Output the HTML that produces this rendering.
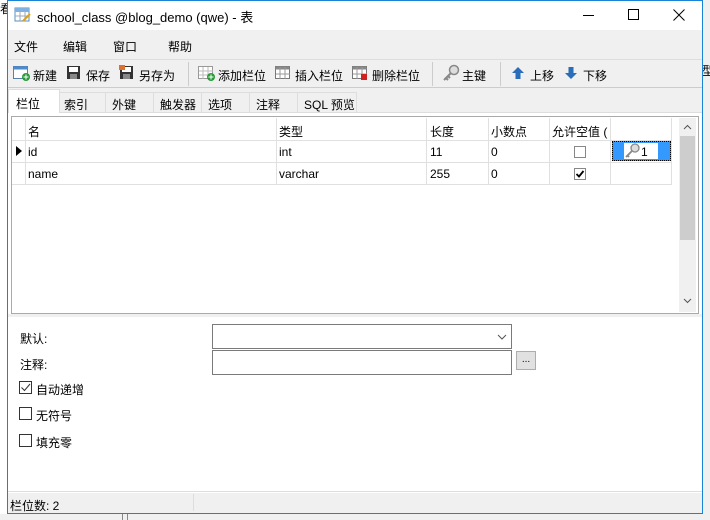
<!DOCTYPE html><html><head><meta charset="utf-8"><style>
*{margin:0;padding:0;box-sizing:border-box}
body{width:710px;height:520px;overflow:hidden;background:#f0f0f0;font-family:"Liberation Sans","Noto Sans CJK SC",sans-serif;font-size:12px;color:#000;position:relative}
.a{position:absolute}
</style></head><body>
<div class="a" style="left:0;top:0;width:7px;height:520px;background:#fff"></div>
<div class="a" style="left:0;top:0;width:7px;height:18px;font-size:12px">看</div>
<div class="a" style="left:0;top:514px;width:710px;height:6px;background:#f0f0f0"></div>
<div class="a" style="left:122px;top:512px;width:6px;height:8px;border-left:1px solid #888;border-right:1px solid #888"></div>
<div class="a" style="left:702px;top:0;width:8px;height:520px;background:#f0f0f0"></div>
<div class="a" style="left:702px;top:62px;font-size:12px">型</div>
<div class="a" style="left:7px;top:0;width:696px;height:514px;border:1px solid #1883d7;background:#f0f0f0"></div>
<div class="a" style="left:8px;top:1px;width:694px;height:29px;background:#fff"></div>
<svg class="a" style="left:14px;top:7px" width="18" height="16"><rect x="1" y="1" width="14" height="13" fill="#fff" stroke="#5a8fc2"/><rect x="1" y="1" width="14" height="4" fill="#7fb2e0"/><path d="M6 5v9M11 5v9M1 9h14" stroke="#9ab"/><path d="M9 14l7-7" stroke="#d9a020" stroke-width="2"/></svg>
<div class="a" style="left:37px;top:7px;font-size:13px">school_class @blog_demo (qwe) - 表</div>
<div class="a" style="left:583px;top:15px;width:11px;height:1px;background:#000"></div>
<div class="a" style="left:628px;top:9px;width:11px;height:11px;border:1px solid #000"></div>
<svg class="a" style="left:673px;top:9px" width="12" height="12"><path d="M0.5 0.5l11 11M11.5 0.5l-11 11" stroke="#000"/></svg>
<div class="a" style="left:14px;top:38px">文件</div>
<div class="a" style="left:63px;top:38px">编辑</div>
<div class="a" style="left:113px;top:38px">窗口</div>
<div class="a" style="left:168px;top:38px">帮助</div>
<div class="a" style="left:8px;top:59px;width:694px;height:1px;background:#ddd"></div>
<svg class="a" style="left:13px;top:65px" width="18" height="16"><rect x="0.5" y="1.5" width="14" height="12" fill="#fff" stroke="#5a7fa8"/><rect x="0.5" y="1.5" width="14" height="3" fill="#4a8ccd"/><circle cx="13" cy="12" r="4" fill="#2a9a3a"/><path d="M13 9.5v5M10.5 12h5" stroke="#fff"/></svg>
<div class="a" style="left:33px;top:67px">新建</div>
<svg class="a" style="left:66px;top:65px" width="16" height="16"><rect x="1" y="1" width="13" height="13" fill="#333"/><rect x="3" y="2" width="9" height="5" fill="#fff"/><rect x="4" y="9" width="7" height="5" fill="#888"/></svg>
<div class="a" style="left:86px;top:67px">保存</div>
<svg class="a" style="left:119px;top:65px" width="16" height="16"><rect x="1" y="1" width="13" height="13" fill="#333"/><rect x="3" y="2" width="9" height="5" fill="#fff"/><rect x="0" y="0" width="6" height="5" fill="#e07030"/><rect x="4" y="9" width="7" height="5" fill="#888"/></svg>
<div class="a" style="left:139px;top:67px">另存为</div>
<div class="a" style="left:188px;top:62px;width:1px;height:24px;background:#ccc"></div>
<svg class="a" style="left:198px;top:65px" width="18" height="16"><rect x="0.5" y="1.5" width="14" height="12" fill="#fff" stroke="#999"/><path d="M5 2v12M10 2v12M1 6h14M1 10h14" stroke="#bbb"/><circle cx="13" cy="12" r="4" fill="#2a9a3a"/><path d="M13 9.5v5M10.5 12h5" stroke="#fff"/></svg>
<div class="a" style="left:218px;top:67px">添加栏位</div>
<svg class="a" style="left:275px;top:65px" width="16" height="16"><rect x="0.5" y="1.5" width="14" height="12" fill="#fff" stroke="#777"/><rect x="0.5" y="1.5" width="14" height="3" fill="#888"/><path d="M5 2v12M10 2v12M1 9h14" stroke="#999"/></svg>
<div class="a" style="left:295px;top:67px">插入栏位</div>
<svg class="a" style="left:352px;top:65px" width="16" height="16"><rect x="0.5" y="1.5" width="14" height="12" fill="#fff" stroke="#777"/><rect x="0.5" y="1.5" width="14" height="3" fill="#888"/><path d="M5 2v12M10 2v12M1 9h14" stroke="#999"/><rect x="9" y="9" width="6" height="6" fill="#d02020"/></svg>
<div class="a" style="left:372px;top:67px">删除栏位</div>
<div class="a" style="left:432px;top:62px;width:1px;height:24px;background:#ccc"></div>
<svg class="a" style="left:442px;top:64px" width="18" height="18"><circle cx="12" cy="6" r="4.5" fill="#ddd" stroke="#888" stroke-width="1.5"/><path d="M9 9l-7 7M4 14l2 2M6 12l2 2" stroke="#888" stroke-width="2"/></svg>
<div class="a" style="left:462px;top:67px">主键</div>
<div class="a" style="left:500px;top:62px;width:1px;height:24px;background:#ccc"></div>
<svg class="a" style="left:511px;top:66px" width="14" height="14"><path d="M7 1l6 6h-3.5v6h-5v-6H1z" fill="#2a6db8"/></svg>
<div class="a" style="left:530px;top:67px">上移</div>
<svg class="a" style="left:564px;top:66px" width="14" height="14"><path d="M7 13l6-6h-3.5v-6h-5v6H1z" fill="#2a6db8"/></svg>
<div class="a" style="left:583px;top:67px">下移</div>
<div class="a" style="left:8px;top:87px;width:694px;height:1px;background:#ccc"></div>
<div class="a" style="left:8px;top:91px;width:694px;height:22px;border-bottom:1px solid #ddd"></div>
<div class="a" style="left:59px;top:92px;width:298px;height:21px;border:1px solid #ddd;background:#f0f0f0"></div>
<div class="a" style="left:8px;top:89px;width:52px;height:25px;background:#fff;border:1px solid #ddd;border-bottom:none"></div>
<div class="a" style="left:16px;top:95px">栏位</div>
<div class="a" style="left:64px;top:96px">索引</div>
<div class="a" style="left:105px;top:92px;width:1px;height:21px;background:#ddd"></div>
<div class="a" style="left:112px;top:96px">外键</div>
<div class="a" style="left:153px;top:92px;width:1px;height:21px;background:#ddd"></div>
<div class="a" style="left:160px;top:96px">触发器</div>
<div class="a" style="left:201px;top:92px;width:1px;height:21px;background:#ddd"></div>
<div class="a" style="left:208px;top:96px">选项</div>
<div class="a" style="left:249px;top:92px;width:1px;height:21px;background:#ddd"></div>
<div class="a" style="left:256px;top:96px">注释</div>
<div class="a" style="left:297px;top:92px;width:1px;height:21px;background:#ddd"></div>
<div class="a" style="left:304px;top:96px">SQL 预览</div>
<div class="a" style="left:8px;top:113px;width:694px;height:380px;background:#fff"></div>
<div class="a" style="left:11px;top:116px;width:688px;height:198px;border:1px solid #aaa;background:#fff"></div>
<div class="a" style="left:8px;top:314px;width:694px;height:3px;background:#f0f0f0"></div>
<div class="a" style="left:12px;top:140px;width:659px;height:1px;background:#e0e0e0"></div>
<div class="a" style="left:12px;top:162px;width:659px;height:1px;background:#e0e0e0"></div>
<div class="a" style="left:12px;top:184px;width:659px;height:1px;background:#e0e0e0"></div>
<div class="a" style="left:25px;top:118px;width:1px;height:67px;background:#e0e0e0"></div>
<div class="a" style="left:276px;top:118px;width:1px;height:67px;background:#e0e0e0"></div>
<div class="a" style="left:426px;top:118px;width:1px;height:67px;background:#e0e0e0"></div>
<div class="a" style="left:488px;top:118px;width:1px;height:67px;background:#e0e0e0"></div>
<div class="a" style="left:549px;top:118px;width:1px;height:67px;background:#e0e0e0"></div>
<div class="a" style="left:610px;top:118px;width:1px;height:67px;background:#e0e0e0"></div>
<div class="a" style="left:671px;top:118px;width:1px;height:67px;background:#e0e0e0"></div>
<div class="a" style="left:28px;top:123px">名</div>
<div class="a" style="left:279px;top:123px">类型</div>
<div class="a" style="left:430px;top:123px">长度</div>
<div class="a" style="left:491px;top:123px">小数点</div>
<div class="a" style="left:552px;top:123px">允许空值 (</div>
<svg class="a" style="left:16px;top:146px" width="6" height="10"><path d="M0 0l6 5-6 5z" fill="#000"/></svg>
<div class="a" style="left:28px;top:145px">id</div>
<div class="a" style="left:279px;top:145px">int</div>
<div class="a" style="left:430px;top:145px">11</div>
<div class="a" style="left:491px;top:145px">0</div>
<div class="a" style="left:574px;top:146px;width:12px;height:12px;border:1px solid #888;background:#fff"></div>
<div class="a" style="left:612px;top:141px;width:59px;height:20px;background:#3399ff;border:1px dotted #000"></div>
<div class="a" style="left:624px;top:143px;width:34px;height:16px;background:#fff"></div>
<svg class="a" style="left:624px;top:143px" width="16" height="16"><circle cx="11" cy="5" r="4" fill="#ddd" stroke="#888" stroke-width="1.3"/><path d="M8 8l-6 6M3 12l2 2" stroke="#888" stroke-width="1.8"/></svg>
<div class="a" style="left:641px;top:145px">1</div>
<div class="a" style="left:28px;top:167px">name</div>
<div class="a" style="left:279px;top:167px">varchar</div>
<div class="a" style="left:430px;top:167px">255</div>
<div class="a" style="left:491px;top:167px">0</div>
<div class="a" style="left:574px;top:168px;width:12px;height:12px;border:1px solid #888;background:#fff"></div>
<svg class="a" style="left:575px;top:169px" width="10" height="10"><path d="M1.5 5l2.5 2.5L8.5 2" stroke="#000" stroke-width="1.8" fill="none"/></svg>
<div class="a" style="left:679px;top:118px;width:17px;height:194px;background:#f0f0f0"></div>
<div class="a" style="left:680px;top:136px;width:15px;height:104px;background:#cdcdcd"></div>
<svg class="a" style="left:683px;top:124px" width="9" height="6"><path d="M1 5l3.5-3.5L8 5" stroke="#555" fill="none"/></svg>
<svg class="a" style="left:683px;top:298px" width="9" height="6"><path d="M1 1l3.5 3.5L8 1" stroke="#555" fill="none"/></svg>
<div class="a" style="left:20px;top:330px">默认:</div>
<div class="a" style="left:20px;top:356px">注释:</div>
<div class="a" style="left:212px;top:324px;width:300px;height:25px;border:1px solid #7a7a7a;background:#fff"></div>
<svg class="a" style="left:497px;top:334px" width="10" height="7"><path d="M1 1l4 4 4-4" stroke="#555" fill="none"/></svg>
<div class="a" style="left:212px;top:350px;width:300px;height:25px;border:1px solid #7a7a7a;background:#fff"></div>
<div class="a" style="left:516px;top:351px;width:20px;height:19px;border:1px solid #adadad;background:#e1e1e1;font-size:10px;text-align:center;line-height:16px">...</div>
<div class="a" style="left:19px;top:381px;width:13px;height:13px;border:1px solid #333;background:#fff"></div>
<svg class="a" style="left:20px;top:382px" width="11" height="11"><path d="M1.5 5.5l3 3L10 2" stroke="#333" fill="none"/></svg>
<div class="a" style="left:36px;top:381px">自动递增</div>
<div class="a" style="left:19px;top:407px;width:13px;height:13px;border:1px solid #333;background:#fff"></div>
<div class="a" style="left:36px;top:407px">无符号</div>
<div class="a" style="left:19px;top:434px;width:13px;height:13px;border:1px solid #333;background:#fff"></div>
<div class="a" style="left:36px;top:434px">填充零</div>
<div class="a" style="left:8px;top:491px;width:694px;height:1px;background:#ddd"></div>
<div class="a" style="left:10px;top:497px">栏位数: 2</div>
<div class="a" style="left:193px;top:494px;width:1px;height:17px;background:#ddd"></div>
</body></html>
